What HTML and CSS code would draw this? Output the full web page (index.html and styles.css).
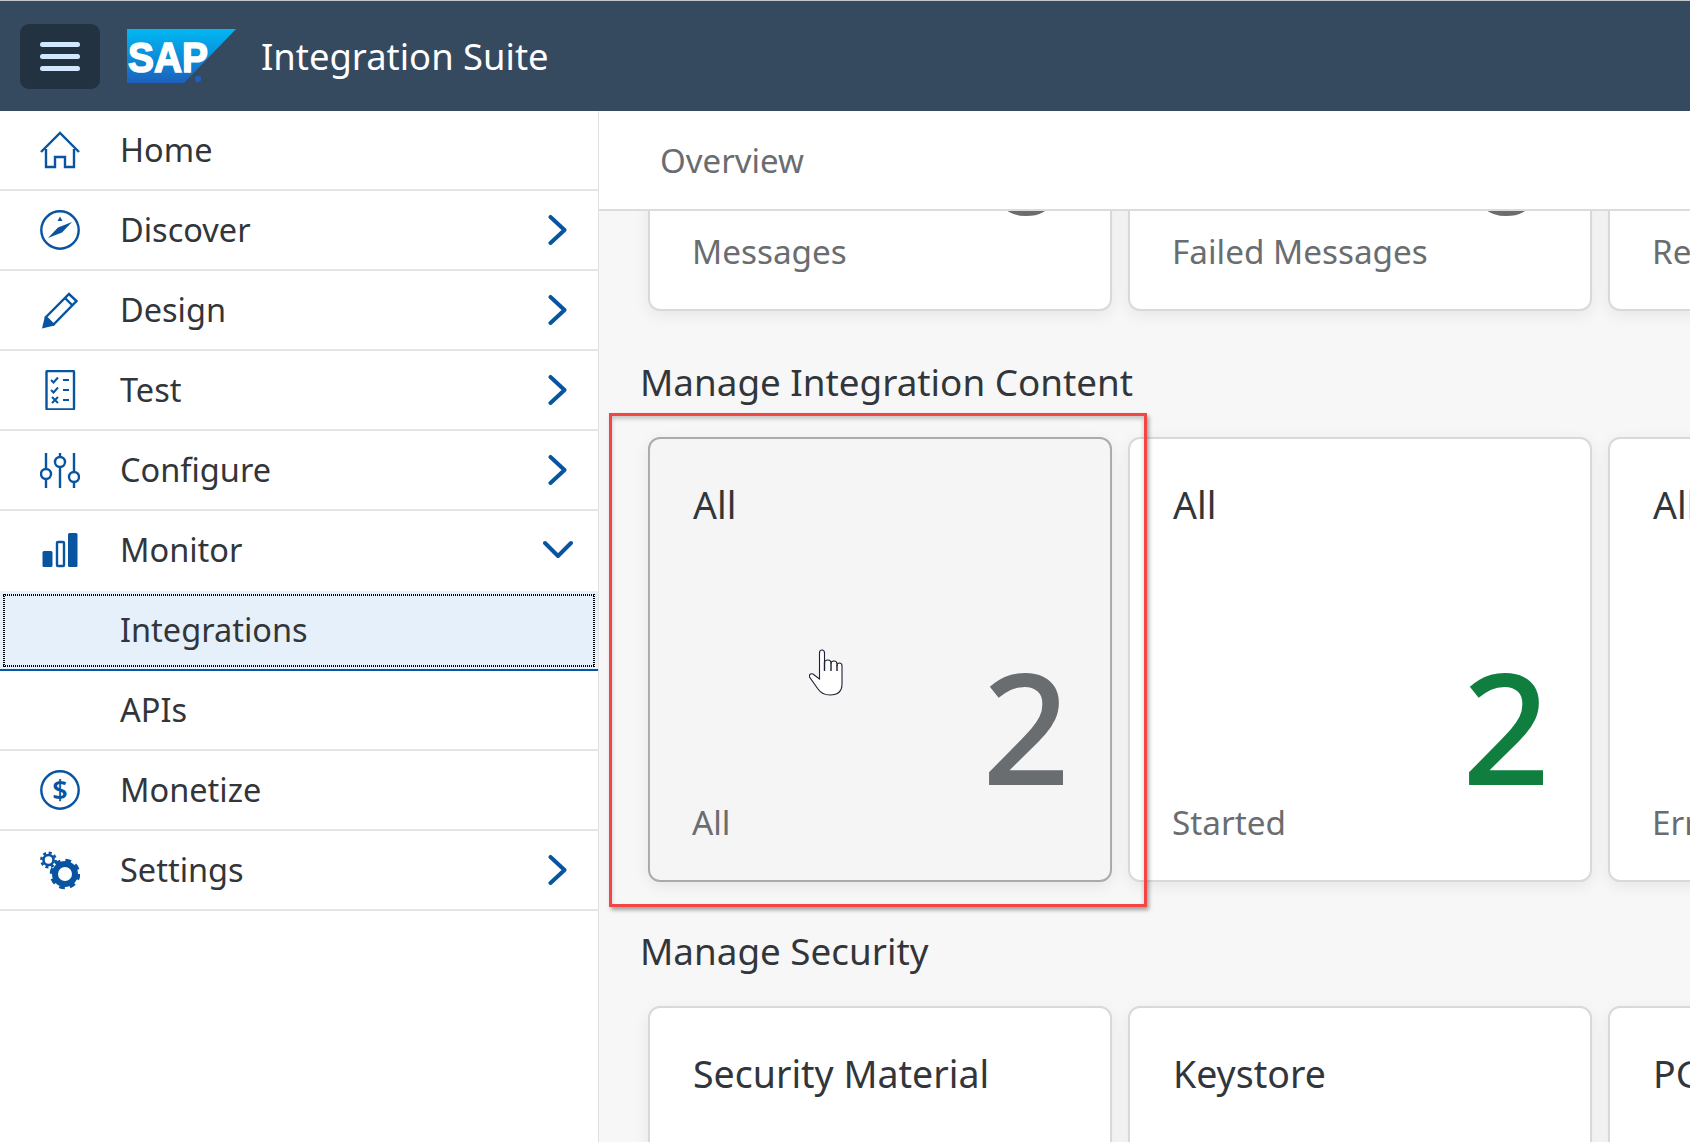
FILE: index.html
```html
<!DOCTYPE html>
<html lang="en">
<head>
<meta charset="utf-8">
<title>Integration Suite</title>
<link rel="stylesheet" href="styles.css">
</head>
<body>
<div class="page">
  <header class="shell">
    <button class="menu-btn" aria-label="Menu"><span></span><span></span><span></span></button>
    <svg class="logo" viewBox="0 0 109 54">
      <defs><linearGradient id="sapg" x1="0" y1="0" x2="0" y2="1"><stop offset="0" stop-color="#00b8f1"/><stop offset="0.5" stop-color="#0a8fdc"/><stop offset="1" stop-color="#1e5fbb"/></linearGradient></defs>
      <polygon points="0,0 109,0 57,54 0,54" fill="url(#sapg)"/>
      <text class="logo-text" x="1" y="43" textLength="80" lengthAdjust="spacingAndGlyphs">SAP</text>
      <circle cx="71" cy="50" r="3.2" fill="#1e5fbb"/>
    </svg>
    <div class="shell-title">Integration Suite</div>
  </header>
  <div class="body">
    <nav class="side">
      <div class="row">
        <svg class="ico" viewBox="0 0 40 40"><path class="s" d="M1 22 L20 3 L39 22"/><path class="s" d="M6 19 V37 H15 V27 H25 V37 H34 V19"/></svg>
        <span class="label">Home</span>
      </div>
      <div class="row">
        <svg class="ico" viewBox="0 0 40 40"><circle class="s" cx="20" cy="20" r="18.7"/><polygon class="f" points="8,28 18,17.500 32,12 22,22.500"/><polygon class="f" points="20,6.500 22.500,11 17.500,11"/></svg>
        <span class="label">Discover</span>
        <svg class="chev" viewBox="0 0 30 30"><path d="M7.500 2 L21.500 15 L7.500 28"/></svg>
      </div>
      <div class="row">
        <svg class="ico" viewBox="0 0 40 40"><path class="s" d="M6 27 L29 4 L36.500 11 L13.500 34.500 Z"/><path class="s" d="M25 8 L32.500 15.500"/><polygon class="f" points="2,38.500 5,26 14.500,35.500"/></svg>
        <span class="label">Design</span>
        <svg class="chev" viewBox="0 0 30 30"><path d="M7.500 2 L21.500 15 L7.500 28"/></svg>
      </div>
      <div class="row">
        <svg class="ico" viewBox="0 0 40 40"><rect class="s" x="6.500" y="1" width="27.500" height="38.500" rx="1"/><path class="t" d="M11 10 L13.500 12.500 L18 7.500 M11 20 L13.500 22.500 L18 17.500 M12 27 L18 33 M18 27 L12 33 M23 10 H29 M23 20 H29 M23 30 H29"/></svg>
        <span class="label">Test</span>
        <svg class="chev" viewBox="0 0 30 30"><path d="M7.500 2 L21.500 15 L7.500 28"/></svg>
      </div>
      <div class="row">
        <svg class="ico" viewBox="0 0 40 40"><path class="s" d="M6 3 V18 M6 29 V38 M20 3 V6 M20 18 V38 M34 3 V21 M34 32 V38"/><circle class="s" cx="6" cy="24" r="5"/><circle class="s" cx="20" cy="12" r="5"/><circle class="s" cx="34" cy="27" r="5"/></svg>
        <span class="label">Configure</span>
        <svg class="chev" viewBox="0 0 30 30"><path d="M7.500 2 L21.500 15 L7.500 28"/></svg>
      </div>
      <div class="row row-open">
        <svg class="ico" viewBox="0 0 40 40"><rect class="f" x="2.500" y="21" width="10" height="16" rx="1.500"/><rect class="s" x="17" y="12" width="7" height="24" rx="1"/><rect class="f" x="28" y="3" width="9.500" height="34" rx="1.500"/></svg>
        <span class="label">Monitor</span>
        <svg class="chev" viewBox="0 0 30 30"><path d="M2 8 L15 21 L28 8"/></svg>
      </div>
      <div class="row row-selected">
        <span class="ico-gap"></span>
        <span class="label">Integrations</span>
      </div>
      <div class="row">
        <span class="ico-gap"></span>
        <span class="label">APIs</span>
      </div>
      <div class="row">
        <svg class="ico" viewBox="0 0 40 40"><circle class="s" cx="20" cy="20" r="18.700"/><text class="dollar" x="20" y="29.500" text-anchor="middle">$</text></svg>
        <span class="label">Monetize</span>
      </div>
      <div class="row">
        <svg class="ico" viewBox="0 0 40 40"><circle class="gear-ring" cx="25" cy="24" r="10"/><circle class="gear-teeth" cx="25" cy="24" r="13.500"/><circle class="gear-ring-sm" cx="8.500" cy="10" r="5"/><circle class="gear-teeth-sm" cx="8.500" cy="10" r="7.200"/></svg>
        <span class="label">Settings</span>
        <svg class="chev" viewBox="0 0 30 30"><path d="M7.500 2 L21.500 15 L7.500 28"/></svg>
      </div>
    </nav>
    <main class="main">
      <div class="subheader">Overview</div>
      <div class="scroll">
        <div class="content">
          <div class="cards">
            <div class="card"><div class="card-foot"><span class="sub">Messages</span><span class="val">0</span></div></div>
            <div class="card"><div class="card-foot"><span class="sub">Failed Messages</span><span class="val">0</span></div></div>
            <div class="card"><div class="card-foot"><span class="sub">Retries</span></div></div>
          </div>
          <h2 class="section">Manage Integration Content</h2>
          <div class="cards">
            <div class="card card-hover"><div class="card-title">All</div><div class="card-foot"><span class="sub">All</span><span class="val">2</span></div></div>
            <div class="card"><div class="card-title">All</div><div class="card-foot"><span class="sub">Started</span><span class="val val-good">2</span></div></div>
            <div class="card"><div class="card-title">All</div><div class="card-foot"><span class="sub">Error</span></div></div>
          </div>
          <h2 class="section section-2">Manage Security</h2>
          <div class="cards">
            <div class="card"><div class="card-title">Security Material</div></div>
            <div class="card"><div class="card-title">Keystore</div></div>
            <div class="card"><div class="card-title">PGP Keys</div></div>
          </div>
        </div>
      </div>
      <div class="redbox"></div>
      <svg class="cursor" viewBox="0 0 100 80"><path class="hand" d="M39.500 49 L33 44 Q29 43 29.500 47 L38 59 Q42 65 50 65 Q62 65 62 54 V36 Q62 33 59.500 33 Q57 33 57 36 V34 Q57 31 54 31 Q51 31 51 33.500 Q51 30 48 30 Q44.500 30 44.500 33 V23 Q44.500 20 42 20 Q39.500 20 39.500 23 Z"/><path class="hand-lines" d="M44.500 32 V41 M51 33 V41 M57 35 V41"/></svg>
    </main>
  </div>
</div>
</body>
</html>
```

FILE: styles.css
```css
* { box-sizing: border-box; }
html, body { margin: 0; padding: 0; height: 100%; overflow: hidden; }
body { font-family: "Noto Sans", "Open Sans", sans-serif; color: #32363a; background: #fff; }
.page { height: 1142px; display: flex; flex-direction: column; border-top: 1px solid #c4c8cc; }

.shell { height: 110px; flex: none; background: #354a5f; display: flex; align-items: center; padding-left: 20px; }
.menu-btn { width: 80px; height: 65px; border: 0; border-radius: 9px; background: #233240; padding: 0; display: flex; flex-direction: column; align-items: center; justify-content: center; gap: 7px; margin-right: 27px; }
.menu-btn span { display: block; width: 40px; height: 5px; border-radius: 3px; background: #d1e8ff; }
.logo { width: 109px; height: 54px; flex: none; margin-right: 25px; }
.logo-text { font-family: "Liberation Sans", sans-serif; font-weight: 700; font-size: 43px; fill: #fff; stroke: #fff; stroke-width: 1.6; }
.shell-title { font-size: 36.4px; color: #fff; white-space: nowrap; }

.body { flex: 1; display: flex; min-height: 0; }
.side { width: 599px; flex: none; background: #fff; border-right: 1px solid #e0e0e0; }
.row { height: 80px; padding: 0 25px 0 40px; display: flex; align-items: center; gap: 40px; border-bottom: 2px solid #e5e5e5; }
.row-open { border-bottom-color: transparent; }
.row-selected { background: #e5f0fa; border-bottom-color: #0854a0; position: relative; }
.row-selected::after {
  content: ""; position: absolute; inset: 3px 3px 2px 3px; pointer-events: none;
  background:
    repeating-linear-gradient(90deg, #000 0 1px, transparent 1px 2px) top / 100% 2px no-repeat,
    repeating-linear-gradient(90deg, #000 0 1px, transparent 1px 2px) bottom / 100% 2px no-repeat,
    repeating-linear-gradient(0deg, #000 0 1px, transparent 1px 2px) left / 2px 100% no-repeat,
    repeating-linear-gradient(0deg, #000 0 1px, transparent 1px 2px) right / 2px 100% no-repeat;
}
.ico, .ico-gap { width: 40px; height: 40px; flex: none; }
.ico .s { fill: none; stroke: #0854a0; stroke-width: 2.4; }
.ico .t { fill: none; stroke: #0854a0; stroke-width: 2; }
.ico .f { fill: #0854a0; }
.dollar { font-family: "Noto Sans", sans-serif; font-weight: 600; font-size: 27px; fill: #0854a0; }
.gear-ring { fill: none; stroke: #0854a0; stroke-width: 6; }
.gear-teeth { fill: none; stroke: #0854a0; stroke-width: 3.5; stroke-dasharray: 5.600 5; }
.gear-ring-sm { fill: none; stroke: #0854a0; stroke-width: 2.600; }
.gear-teeth-sm { fill: none; stroke: #0854a0; stroke-width: 2.500; stroke-dasharray: 3 2.650; }
.label { flex: 1; font-size: 32.5px; line-height: 1.2; padding-bottom: 2px; }
.chev { width: 30px; height: 30px; flex: none; }
.chev path { fill: none; stroke: #0854a0; stroke-width: 4; stroke-linecap: round; stroke-linejoin: round; }

.main { flex: 1; min-width: 0; position: relative; display: flex; flex-direction: column; background: #f7f7f7; }
.subheader { height: 100px; flex: none; background: #fff; border-bottom: 2px solid #dcdcdc; padding-left: 61px; display: flex; align-items: center; font-size: 33px; color: #6a6d70; position: relative; z-index: 1; }
.scroll { flex: 1; min-height: 0; overflow: hidden; }
.content { margin-top: -345px; padding-left: 41px; }
.cards { display: flex; gap: 16px; margin-left: 8px; }
.card { width: 464px; height: 445px; flex: none; background: #fff; border: 2px solid #d9d9d9; border-radius: 12px; box-shadow: 0 4px 16px rgba(0,0,0,.07); padding: 0 43px; display: flex; flex-direction: column; }
.card-hover { background: #f5f5f5; border-color: #ababab; }
.card-title { font-size: 37.5px; line-height: 48px; margin-top: 42px; white-space: nowrap; }
.card-foot { margin-top: auto; display: flex; align-items: flex-end; justify-content: space-between; position: relative; height: 220px; padding-bottom: 36px; margin-left: -1px; }
.sub { font-size: 33.3px; line-height: 44px; color: #6a6d70; white-space: nowrap; }
.val { position: absolute; right: -3px; bottom: 78px; font-size: 154px; line-height: 154px; font-weight: 500; color: #6a6d70; }
.val-good { color: #107e3e; }
.section { margin: 0; font-weight: 400; font-size: 36.8px; line-height: 48px; color: #32363a; padding-top: 47px; padding-bottom: 31px; white-space: nowrap; }
.section-2 { padding-top: 45px; padding-bottom: 31px; }

.redbox { position: absolute; left: 10px; top: 302px; width: 538px; height: 494px; border: 3px solid #f44545; box-shadow: 2px 3px 4px rgba(0,0,0,.35), inset 0 3px 4px rgba(0,0,0,.2); pointer-events: none; z-index: 2; }
.cursor { position: absolute; left: 181px; top: 519px; width: 100px; height: 80px; z-index: 3; }
.hand { fill: #fff; stroke: #1c2233; stroke-width: 1.100; }
.hand-lines { fill: none; stroke: #1c2233; stroke-width: 1.400; }
```
